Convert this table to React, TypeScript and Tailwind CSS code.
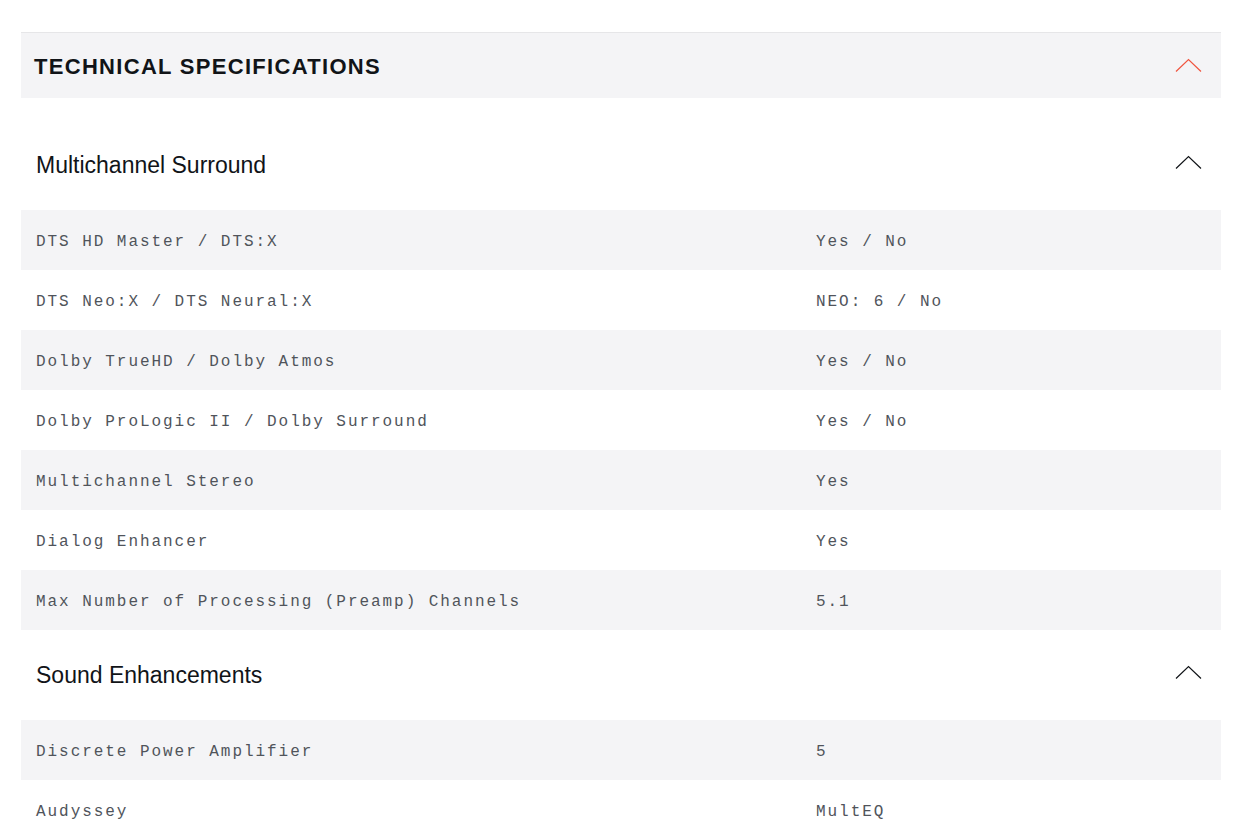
import React from "react";

const sections = [
  {
    title: "Multichannel Surround",
    rows: [
      ["DTS HD Master / DTS:X", "Yes / No"],
      ["DTS Neo:X / DTS Neural:X", "NEO: 6 / No"],
      ["Dolby TrueHD / Dolby Atmos", "Yes / No"],
      ["Dolby ProLogic II / Dolby Surround", "Yes / No"],
      ["Multichannel Stereo", "Yes"],
      ["Dialog Enhancer", "Yes"],
      ["Max Number of Processing (Preamp) Channels", "5.1"],
    ],
  },
  {
    title: "Sound Enhancements",
    rows: [
      ["Discrete Power Amplifier", "5"],
      ["Audyssey", "MultEQ"],
    ],
  },
];

function Chevron({ color }: { color: string }) {
  return (
    <svg width="27" height="15" viewBox="0 0 27 15" fill="none">
      <path d="M1 13.5 L13.5 1.5 L26 13.5" stroke={color} strokeWidth="1.2" />
    </svg>
  );
}

export default function App() {
  return (
    <div className="h-[832px] overflow-hidden bg-white pt-[32px]" style={{ fontFamily: "'Liberation Sans', Arial, sans-serif" }}>
      <div className="ml-[21px] w-[1200px]">
        <div className="flex h-[66px] items-center justify-between border-t border-[#e6e6e8] bg-[#f4f4f6] pl-[13px] pr-[19px]">
          <h2 className="pt-[1px] text-[22px] font-bold tracking-[1.3px] text-[#111418]">TECHNICAL SPECIFICATIONS</h2>
          <Chevron color="#f0553f" />
        </div>
        <div className="mt-[22px]">
          {sections.map((s) => (
            <div key={s.title}>
              <div className="flex h-[90px] items-center justify-between pl-[15px] pr-[19px]">
                <h3 className="text-[23px] text-[#111418]">{s.title}</h3>
                <div className="mb-[6px]">
                  <Chevron color="#111418" />
                </div>
              </div>
              {s.rows.map(([k, v], i) => (
                <div
                  key={k}
                  className={`grid h-[60px] grid-cols-[780px_1fr] items-center px-[15px] pt-[3px] text-[16px] tracking-[1.95px] text-[#50545b] ${i % 2 === 0 ? "bg-[#f4f4f6]" : "bg-white"}`}
                  style={{ fontFamily: "'Liberation Mono', 'DejaVu Sans Mono', monospace" }}
                >
                  <span>{k}</span>
                  <span>{v}</span>
                </div>
              ))}
            </div>
          ))}
        </div>
      </div>
    </div>
  );
}
